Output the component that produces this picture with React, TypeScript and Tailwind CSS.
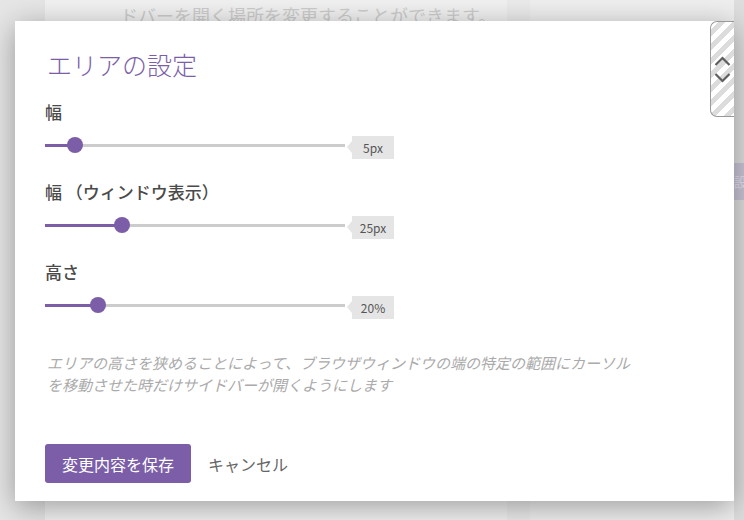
import React from "react"

const jp = { fontFamily: '"Noto Sans CJK JP", "Noto Sans", sans-serif' }

type SliderProps = {
  label: string
  fill: number
  value: string
}

function SliderRow({ label, fill, value }: SliderProps) {
  return (
    <div className="flex flex-col">
      <div className="h-[24px] text-[17px] leading-[24px] font-medium text-[#4a4a4a]">{label}</div>
      <div className="mt-[12px] flex h-[23px] items-start">
        <div className="relative mt-[8px] h-[3px] w-[300px] bg-[#cccccc]">
          <div className="absolute left-0 top-0 h-[3px] bg-[#7b5ea7]" style={{ width: fill }} />
          <div
            className="absolute top-[-7px] h-[16px] w-[16px] rounded-full bg-[#7b5ea7]"
            style={{ left: fill - 8 }}
          />
        </div>
        <div className="ml-[2px] mt-[5px] h-0 w-0 border-y-[6px] border-r-[5px] border-y-transparent border-r-[#e5e5e5]" />
        <div className="flex h-[23px] w-[42px] items-center justify-center bg-[#e5e5e5] text-[12px] text-[#555]">
          {value}
        </div>
      </div>
    </div>
  )
}

function ScrollWidget() {
  return (
    <div
      className="absolute right-0 top-0 flex h-[96px] w-[24px] flex-col items-center justify-center gap-[7px] rounded-l-[7px] border border-r-0 border-[#9a9a9a]"
      style={{
        backgroundImage:
          "repeating-linear-gradient(135deg, #ffffff 0px, #ffffff 5px, #dcdcdc 5px, #dcdcdc 10px)",
      }}
    >
      <svg width="17" height="10" viewBox="0 0 17 10" fill="none">
        <path d="M1.5 9 L8.5 2 L15.5 9" stroke="#5f5f5f" strokeWidth="2.2" />
      </svg>
      <svg width="17" height="10" viewBox="0 0 17 10" fill="none">
        <path d="M1.5 1 L8.5 8 L15.5 1" stroke="#5f5f5f" strokeWidth="2.2" />
      </svg>
    </div>
  )
}

export default function App() {
  return (
    <div className="relative h-[520px] w-[744px] overflow-hidden bg-[#e9e9e9]" style={jp}>
      {/* page behind the dialog */}
      <div className="flex h-full">
        <div className="w-[45px] bg-[#e6e6e6]" />
        <div className="w-[462px] bg-[#f1f1f1]">
          <div className="pl-[75px] pt-[3px] text-[18px] leading-[24px] text-[#cdcdcd]">
            ドバーを開く場所を変更することができます。
          </div>
        </div>
        <div className="w-[23px] bg-[#ebebeb]" />
        <div className="flex flex-1 justify-end bg-[#efefef]">
          <div className="flex w-[10px] flex-col bg-[#dedede] pt-[163px]">
            <div className="flex h-[37px] items-center overflow-hidden bg-[#c9c4d6] text-[13px] text-[#e6e2ee]">
              設
            </div>
          </div>
        </div>
      </div>

      {/* dialog */}
      <div className="absolute left-[15px] top-[21px] h-[480px] w-[719px] overflow-hidden bg-white shadow-[0_6px_28px_rgba(0,0,0,0.35)]">
        <ScrollWidget />
        <div className="flex flex-col pl-[30px] pt-[27px]">
          <h2 className="h-[32px] pl-[2px] text-[25px] leading-[32px] font-light text-[#7b5ea7]">エリアの設定</h2>
          <div className="mt-[20px] flex flex-col gap-[21px]">
            <SliderRow label="幅" fill={30} value="5px" />
            <SliderRow label="幅 （ウィンドウ表示）" fill={77} value="25px" />
            <SliderRow label="高さ" fill={53} value="20%" />
          </div>
          <p className="mt-[33px] w-[600px] pl-[2px] text-[15px] leading-[22px] italic text-[#aaaaaa]">
            エリアの高さを狭めることによって、ブラウザウィンドウの端の特定の範囲にカーソルを移動させた時だけサイドバーが開くようにします
          </p>
          <div className="mt-[48px] flex items-center">
            <button className="h-[39px] w-[146px] rounded-[3px] bg-[#7b5ea7] text-[16px] text-white">
              変更内容を保存
            </button>
            <button className="ml-[17px] text-[16px] text-[#666]">キャンセル</button>
          </div>
        </div>
      </div>
    </div>
  )
}
